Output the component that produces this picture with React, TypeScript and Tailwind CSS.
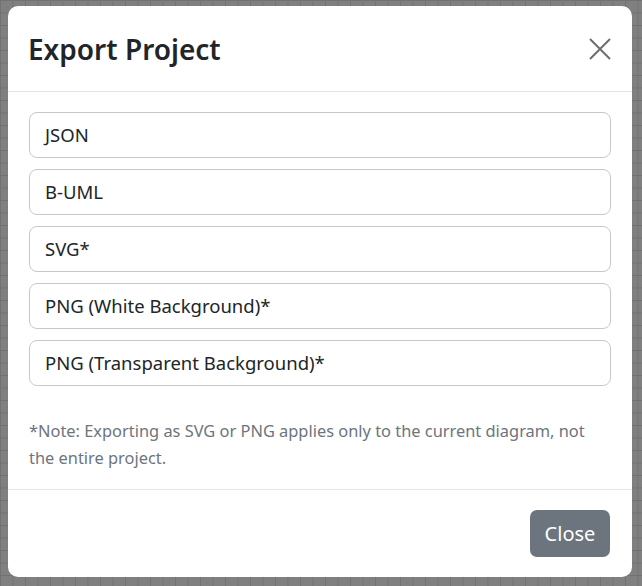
import React from "react";

const options = [
  "JSON",
  "B-UML",
  "SVG*",
  "PNG (White Background)*",
  "PNG (Transparent Background)*",
];

export default function App() {
  return (
    <div className="h-[586px] w-[642px] overflow-hidden bg-[#808080] bg-[linear-gradient(#727272_1px,transparent_1px),linear-gradient(90deg,#727272_1px,transparent_1px)] bg-[size:12.5px_12.5px] pl-[8px] pt-[6px] font-['Noto_Sans',sans-serif]">
      <div className="flex h-[571px] w-[624px] flex-col rounded-[10px] bg-white text-[#212529]">
        <div className="flex h-[86px] items-center justify-between border-b border-[#e5e5e5] pl-[20px] pr-[21px]">
          <h2 className="text-[28px] font-semibold leading-none">Export Project</h2>
          <button className="flex h-[22px] w-[22px] items-center justify-center">
            <svg width="22" height="22" viewBox="0 0 22 22" fill="none" stroke="#6e6e6e" strokeWidth="2">
              <path d="M1 1L21 21M21 1L1 21" />
            </svg>
          </button>
        </div>
        <div className="flex flex-1 flex-col px-[21px] pt-[20px]">
          <div className="flex flex-col gap-[11px]">
            {options.map((o) => (
              <button
                key={o}
                className="h-[46px] w-full rounded-[8px] border border-[#c8c8c8] bg-white px-[15px] text-left text-[18.5px] text-[#212529]"
              >
                {o}
              </button>
            ))}
          </div>
          <p className="mt-[31px] text-[16.4px] leading-[27px] text-[#6c757d]">
            *Note: Exporting as SVG or PNG applies only to the current diagram, not the entire project.
          </p>
        </div>
        <div className="flex h-[88px] items-center justify-end border-t border-[#e5e5e5] pr-[22px]">
          <button className="h-[47px] w-[80px] rounded-[7px] bg-[#6c757d] text-[20px] text-white">
            Close
          </button>
        </div>
      </div>
    </div>
  );
}
